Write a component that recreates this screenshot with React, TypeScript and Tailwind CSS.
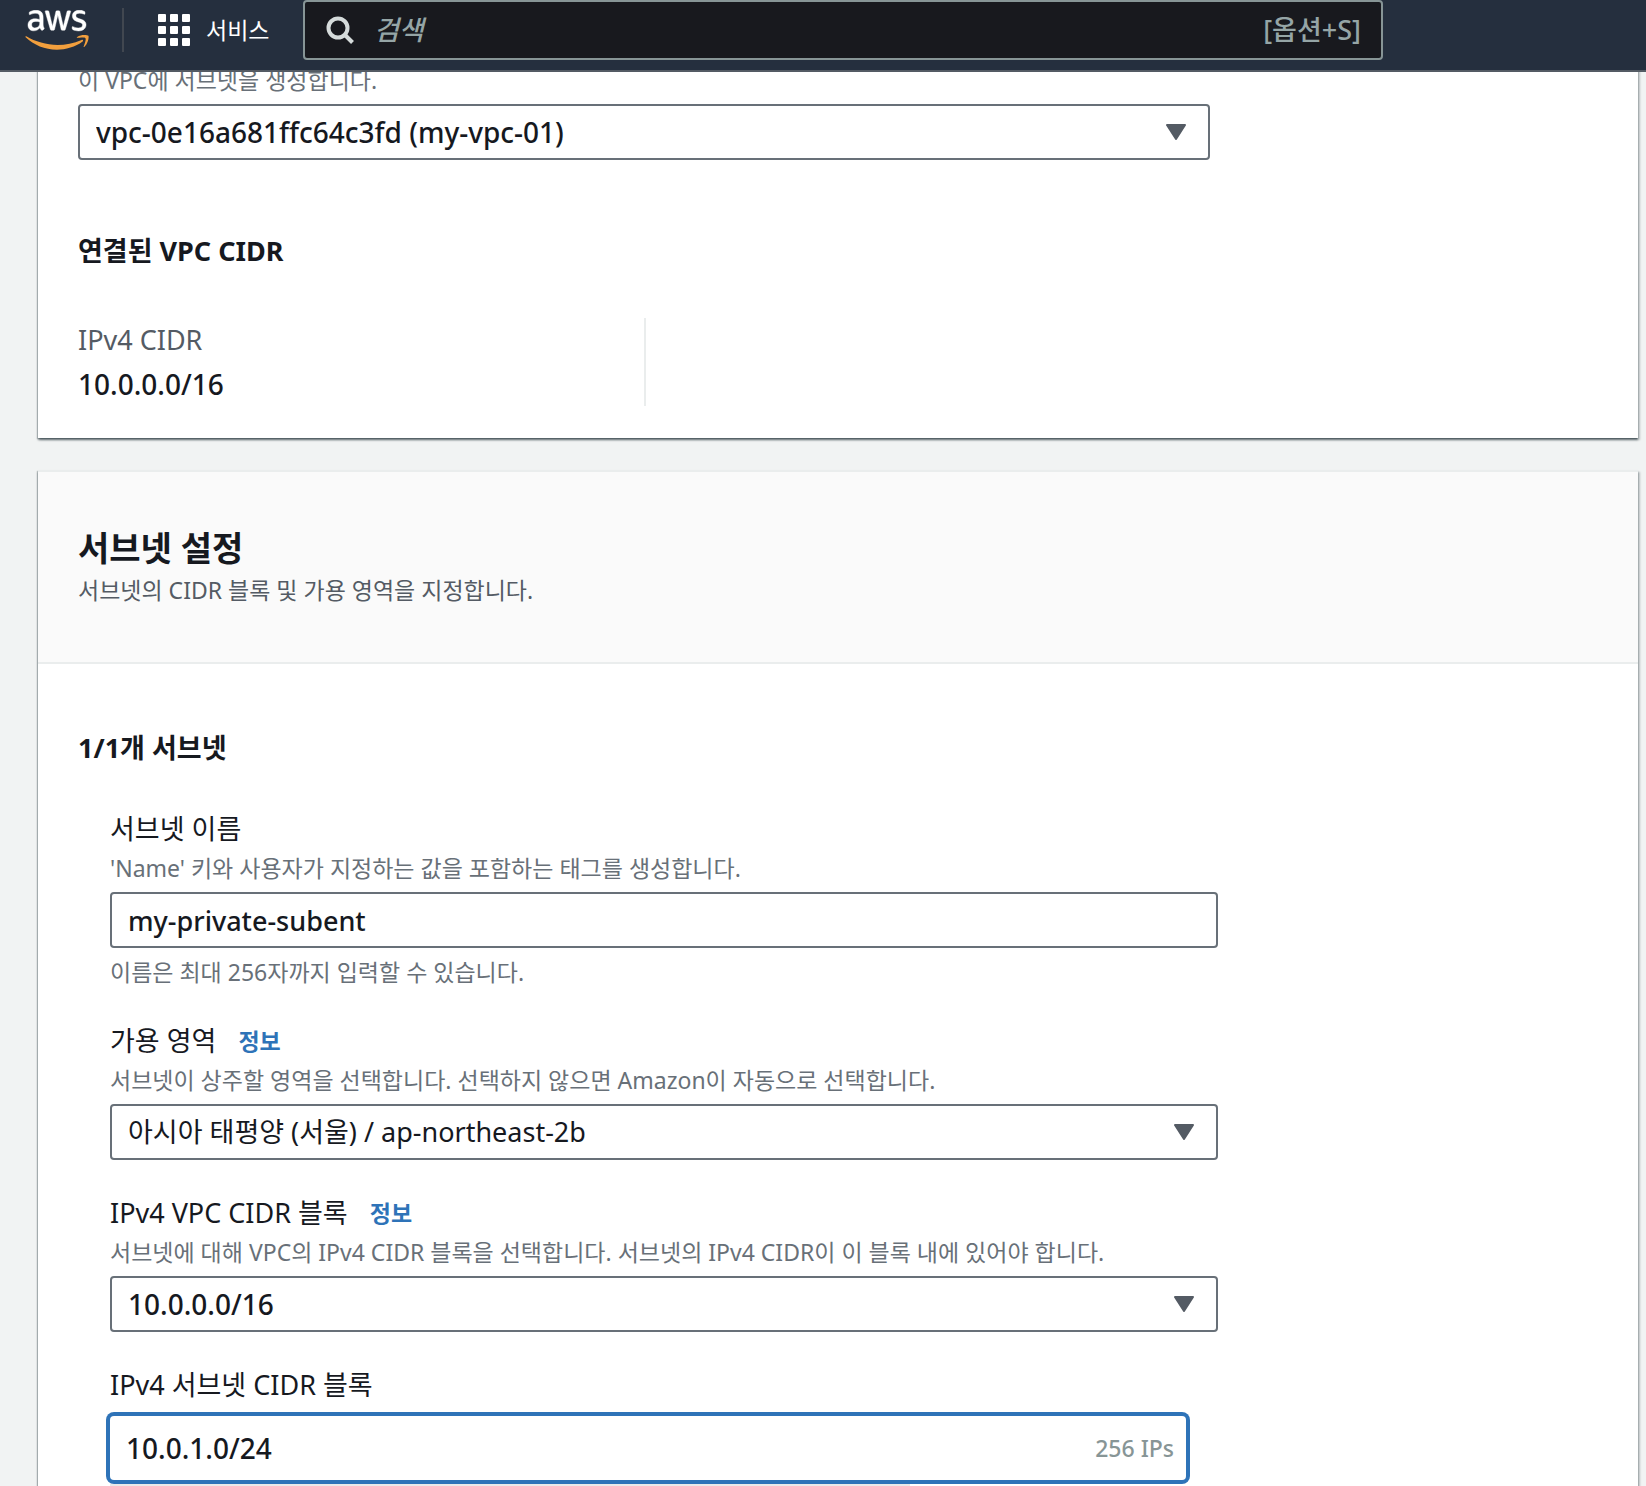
import { useId, useState } from "react";
import type { ReactNode } from "react";

const FONT = "font-['Noto_Sans','Noto_Sans_CJK_KR',sans-serif]";

function AwsLogo() {
  return (
    <a href="#" aria-label="aws" className="flex h-10 w-16 flex-col items-center text-white">
      <svg viewBox="0 0 304 182" className="h-10 w-16" preserveAspectRatio="none" aria-hidden="true">
        <path
          fill="currentColor"
          stroke="currentColor"
          strokeWidth="2"
          d="M86.4 66.4c0 3.7.4 6.7 1.1 8.9.8 2.2 1.8 4.6 3.2 7.2.5.8.7 1.6.7 2.3 0 1-.6 2-1.9 3l-6.3 4.2c-.9.6-1.8.9-2.6.9-1 0-2-.5-3-1.4-1.4-1.5-2.6-3.1-3.6-4.7-1-1.7-2-3.6-3.1-5.9-7.8 9.2-17.6 13.8-29.4 13.8-8.4 0-15.1-2.4-20-7.2-4.9-4.8-7.4-11.2-7.4-19.2 0-8.500 3-15.400 9.100-20.600 6.100-5.200 14.200-7.800 24.500-7.800 3.400 0 6.900.3 10.600.8 3.700.5 7.500 1.300 11.500 2.200v-7.300c0-7.600-1.600-12.900-4.700-16-3.200-3.100-8.600-4.600-16.300-4.600-3.500 0-7.100.4-10.800 1.300-3.700.9-7.300 2-10.800 3.400-1.600.7-2.800 1.100-3.500 1.300-.7.2-1.200.3-1.600.3-1.400 0-2.100-1-2.100-3.100v-4.900c0-1.600.2-2.800.7-3.500.5-.7 1.400-1.400 2.800-2.100 3.500-1.800 7.700-3.300 12.600-4.500 4.900-1.300 10.100-1.900 15.600-1.900 11.900 0 20.600 2.700 26.200 8.100 5.500 5.400 8.300 13.600 8.300 24.600v32.400zM45.800 81.600c3.300 0 6.700-.6 10.300-1.800 3.600-1.200 6.800-3.400 9.500-6.400 1.600-1.900 2.800-4 3.400-6.400.6-2.400 1-5.300 1-8.700v-4.200c-2.900-.7-6-1.300-9.200-1.700-3.200-.4-6.300-.6-9.400-.6-6.700 0-11.600 1.300-14.900 4-3.300 2.700-4.900 6.500-4.900 11.500 0 4.700 1.200 8.200 3.700 10.600 2.400 2.500 5.900 3.700 10.500 3.700zm80.300 10.800c-1.800 0-3-.3-3.800-1-.8-.6-1.500-2-2.100-3.900L96.700 10.200c-.6-2-.9-3.300-.9-4 0-1.600.8-2.500 2.400-2.500h9.800c1.900 0 3.200.3 3.900 1 .8.6 1.400 2 2 3.900l16.800 66.200 15.600-66.200c.5-2 1.100-3.300 1.900-3.900.8-.6 2.200-1 4-1h8c1.900 0 3.200.3 4 1 .8.6 1.500 2 1.900 3.900l15.800 67 17.300-67c.6-2 1.300-3.300 2-3.900.8-.6 2.100-1 3.900-1h9.300c1.600 0 2.500.8 2.500 2.500 0 .5-.1 1-.2 1.600-.1.6-.3 1.400-.7 2.500l-24.100 77.300c-.6 2-1.300 3.300-2.100 3.900-.8.6-2.100 1-3.800 1h-8.600c-1.900 0-3.200-.3-4-1-.8-.7-1.500-2-1.900-4L156 23l-15.400 64.400c-.5 2-1.100 3.300-1.900 4-.8.7-2.200 1-4 1zm128.500 2.700c-5.200 0-10.400-.6-15.400-1.800-5-1.200-8.900-2.500-11.500-4-1.600-.9-2.700-1.900-3.100-2.800-.4-.9-.6-1.900-.6-2.800v-5.100c0-2.100.8-3.100 2.300-3.100.6 0 1.200.1 1.800.3.6.2 1.500.6 2.500 1 3.400 1.500 7.100 2.700 11 3.500 4 .8 7.900 1.200 11.900 1.200 6.300 0 11.200-1.100 14.600-3.300 3.400-2.200 5.200-5.400 5.200-9.500 0-2.800-.9-5.100-2.700-7-1.800-1.900-5.200-3.600-10.100-5.200L246 52c-7.300-2.300-12.700-5.700-16-10.200-3.300-4.400-5-9.300-5-14.500 0-4.200.9-7.900 2.700-11.100 1.800-3.200 4.200-6 7.200-8.200 3-2.300 6.400-4 10.400-5.200 4-1.200 8.200-1.700 12.600-1.700 2.200 0 4.500.1 6.700.4 2.300.3 4.400.7 6.500 1.100 2 .5 3.900 1 5.700 1.600 1.800.6 3.200 1.200 4.200 1.800 1.400.8 2.400 1.600 3 2.500.6.8.9 1.900.9 3.300v4.700c0 2.100-.8 3.200-2.300 3.200-.8 0-2.100-.4-3.800-1.200-5.700-2.600-12.100-3.900-19.200-3.900-5.700 0-10.200.9-13.300 2.800-3.100 1.900-4.700 4.800-4.700 8.900 0 2.800 1 5.200 3 7.100 2 1.900 5.700 3.800 11 5.500l14.200 4.500c7.200 2.300 12.400 5.500 15.500 9.600 3.100 4.100 4.600 8.800 4.600 14 0 4.300-.9 8.200-2.600 11.600-1.800 3.400-4.200 6.400-7.300 8.800-3.100 2.500-6.800 4.300-11.100 5.600-4.500 1.400-9.200 2.100-14.300 2.100z"
        />
        <path
          fill="#f29f3d"
          d="M273.500 143.700c-32.900 24.300-80.700 37.200-121.800 37.200-57.600 0-109.500-21.300-148.700-56.700-3.100-2.800-.3-6.600 3.400-4.400 42.400 24.600 94.700 39.500 148.800 39.500 36.500 0 76.600-7.600 113.500-23.200 5.500-2.500 10.200 3.600 4.800 7.600zM287.200 128.100c-4.200-5.400-27.800-2.600-38.500-1.300-3.200.4-3.700-2.400-.8-4.500 18.800-13.200 49.700-9.400 53.300-5 3.600 4.500-1 35.400-18.600 50.200-2.700 2.300-5.300 1.100-4.100-1.900 4-9.900 12.900-32.200 8.700-37.500z"
        />
      </svg>
    </a>
  );
}

function GridIcon() {
  return (
    <svg viewBox="0 0 32 32" className="size-8" fill="#fff" aria-hidden="true">
      {[0, 12, 24].map((y) => [0, 12, 24].map((x) => <rect key={`${x}-${y}`} x={x} y={y} width="8" height="8" rx="1" />))}
    </svg>
  );
}

function Header() {
  return (
    <header className="flex h-[72px] shrink-0 items-start border-b-2 border-[#545b64] bg-[#252f3e]">
      <div className="flex h-[60px] w-[303px] shrink-0 items-center pl-[25px]">
        <AwsLogo />
        <div className="ml-[33px] h-11 w-0.5 bg-[#414750]" />
        <button type="button" className="ml-[34px] flex items-center gap-4 text-[23px] text-white">
          <GridIcon />
          서비스
        </button>
      </div>
      <div className="flex h-[60px] w-full max-w-[1080px] items-center rounded border-2 border-[#879596] bg-[#18191e] pr-5 pl-[21px]">
        <svg viewBox="0 0 28 28" className="size-7 shrink-0" fill="none" stroke="#d5dbdb" strokeWidth="4" aria-hidden="true">
          <circle cx="12" cy="12" r="9.500" />
          <path d="M18.500 18.500 26.500 26.500" />
        </svg>
        <input
          type="search"
          aria-label="검색"
          placeholder="검색"
          className="ml-5 min-w-0 flex-1 bg-transparent text-[27px] font-medium text-white outline-none placeholder:italic placeholder:text-[#95a5a6]"
        />
        <span className="text-[27px] font-medium text-[#95a5a6]">[옵션+S]</span>
      </div>
    </header>
  );
}

function Select({ id, value, label, strong }: { id: string; value: string; label?: string; strong?: boolean }) {
  return (
    <div className="relative">
      <select
        id={id}
        aria-label={label}
        className={`block h-14 w-full appearance-none rounded border-2 border-[#687078] bg-white px-4 text-[#16191f] ${strong ? "text-[28px] font-medium" : "text-[27px] font-normal"}`}
      >
        <option>{value}</option>
      </select>
      <svg viewBox="0 0 20 16" className="pointer-events-none absolute top-5 right-6 h-4 w-5" aria-hidden="true">
        <path d="M1 1h18L10 15z" fill="#545b64" stroke="#545b64" strokeWidth="2" strokeLinejoin="round" />
      </svg>
    </div>
  );
}

function Hint({ children }: { children: ReactNode }) {
  return <p className="text-[23px] leading-10 text-[#687078]">{children}</p>;
}

function FieldLabel({ id, info, children }: { id: string; info?: boolean; children: ReactNode }) {
  return (
    <div className="flex items-center gap-[22px] leading-[38px]">
      <label htmlFor={id} className="text-[27px]">
        {children}
      </label>
      {info && (
        <a href="#" className="text-[23px] font-bold text-[#2e73b8]">
          정보
        </a>
      )}
    </div>
  );
}

const CARD = "shadow-[0_2px_2px_0_#00141b80,2px_2px_2px_0_#00141b30,-1px_1px_1px_0_#00141b30]";

export default function App() {
  const id = useId();
  const [name, setName] = useState("my-private-subent");
  const [cidr, setCidr] = useState("10.0.1.0/24");

  return (
    <div className={`flex h-screen flex-col overflow-hidden bg-[#f1f3f3] text-[#16191f] ${FONT}`}>
      <Header />
      <main className="min-h-0 flex-1 overflow-hidden pr-2 pl-[38px]">
        <section className={`-mt-3 bg-white px-10 pb-8 ${CARD}`}>
          <div className="max-w-[1132px]">
            <Hint>이 VPC에 서브넷을 생성합니다.</Hint>
            <div className="mt-1">
              <Select id={`${id}vpc`} label="VPC" value="vpc-0e16a681ffc64c3fd (my-vpc-01)" strong />
            </div>
          </div>
          <h3 className="mt-[71px] text-[27px] leading-10 font-bold">연결된 VPC CIDR</h3>
          <div className="mt-[47px] grid grid-cols-[568px_1fr]">
            <dl className="border-r-2 border-[#eaeded] leading-[44px]">
              <dt className="text-[27px] text-[#545b64]">IPv4 CIDR</dt>
              <dd className="text-[28px] font-medium">10.0.0.0/16</dd>
            </dl>
          </div>
        </section>

        <section className={`mt-8 border-t-2 border-[#eaeded] bg-white ${CARD}`}>
          <div className="border-b-2 border-[#eaeded] bg-[#fafafa] px-10 pt-[54px] pb-[52px]">
            <h2 className="text-[34px] leading-[44px] font-bold">서브넷 설정</h2>
            <p className="text-[23px] leading-10 text-[#545b64]">서브넷의 CIDR 블록 및 가용 영역을 지정합니다.</p>
          </div>
          <div className="px-10 pt-16">
            <h3 className="text-[27px] leading-10 font-bold">1/1개 서브넷</h3>
            <div className="mt-[42px] ml-8 max-w-[1108px]">
              <FieldLabel id={`${id}name`}>서브넷 이름</FieldLabel>
              <Hint>'Name' 키와 사용자가 지정하는 값을 포함하는 태그를 생성합니다.</Hint>
              <input
                id={`${id}name`}
                type="text"
                value={name}
                onChange={(e) => setName(e.target.value)}
                className="my-1 block h-14 w-full rounded border-2 border-[#687078] px-4 text-[27px] font-medium"
              />
              <Hint>이름은 최대 256자까지 입력할 수 있습니다.</Hint>

              <div className="mt-[30px]">
                <FieldLabel id={`${id}az`} info>
                  가용 영역
                </FieldLabel>
                <Hint>서브넷이 상주할 영역을 선택합니다. 선택하지 않으면 Amazon이 자동으로 선택합니다.</Hint>
                <div className="mt-1">
                  <Select id={`${id}az`} value="아시아 태평양 (서울) / ap-northeast-2b" />
                </div>
              </div>

              <div className="mt-[34px]">
                <FieldLabel id={`${id}block`} info>
                  IPv4 VPC CIDR 블록
                </FieldLabel>
                <Hint>서브넷에 대해 VPC의 IPv4 CIDR 블록을 선택합니다. 서브넷의 IPv4 CIDR이 이 블록 내에 있어야 합니다.</Hint>
                <div className="mt-1">
                  <Select id={`${id}block`} value="10.0.0.0/16" strong />
                </div>
              </div>

              <div className="mt-[34px]">
                <FieldLabel id={`${id}cidr`}>IPv4 서브넷 CIDR 블록</FieldLabel>
                <div className="mt-3 flex h-16 max-w-[1076px] items-center rounded bg-white pr-3 pl-4 ring-4 ring-[#2e73b8]">
                  <input
                    id={`${id}cidr`}
                    type="text"
                    value={cidr}
                    onChange={(e) => setCidr(e.target.value)}
                    className="min-w-0 flex-1 text-[28px] font-medium outline-none"
                  />
                  <span className="text-[23px] font-medium text-[#879596]">256 IPs</span>
                </div>
                <div className="mt-1 h-8 w-[800px] bg-[#eaeaea]" />
              </div>
            </div>
          </div>
        </section>
      </main>
    </div>
  );
}
